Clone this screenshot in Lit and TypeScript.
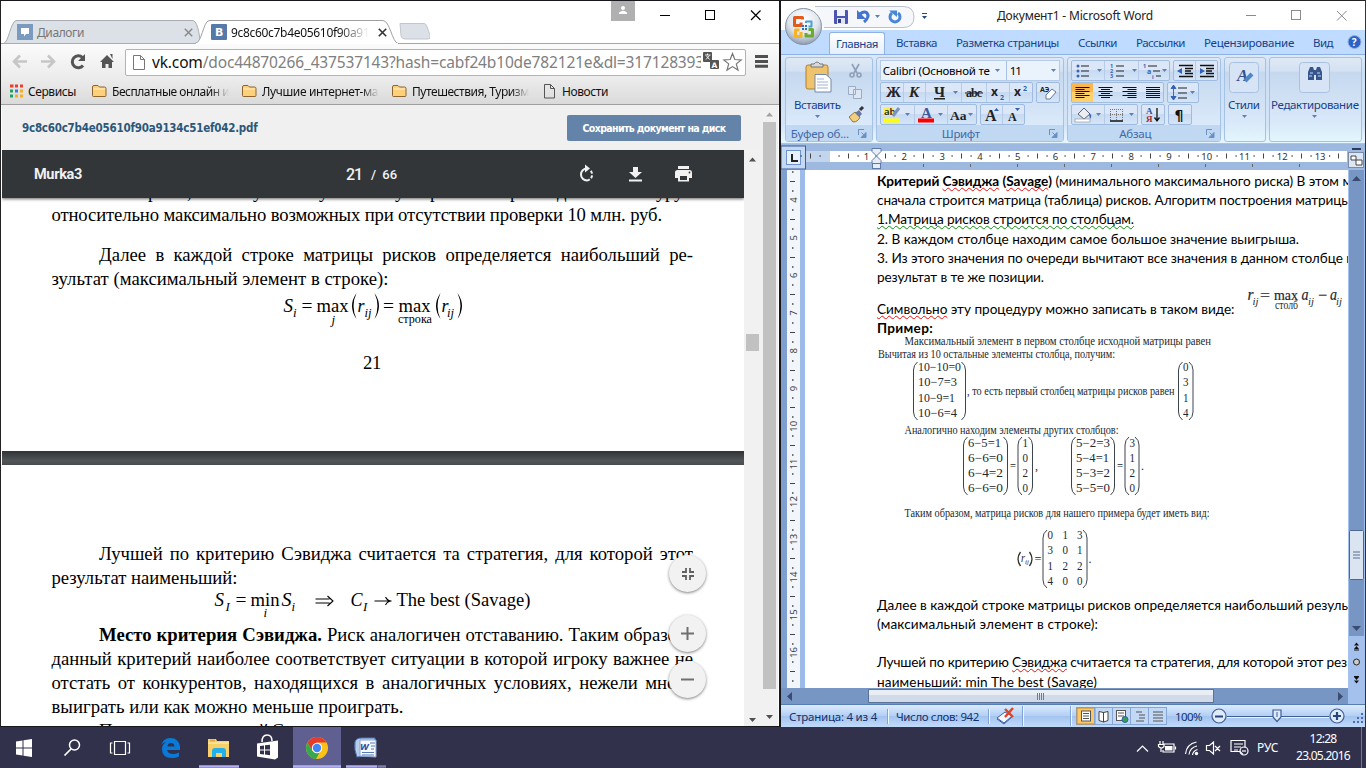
import { LitElement, html, svg, css } from "lit";
import { customElement } from "lit/decorators.js";

/* Text run stretched or tightened to a given advance width. */
const fit = (text: unknown, w: number, cls = "") =>
  html`<span class="fit ${cls}" data-w=${w}>${text}</span>`;

const ic = (w: number, h: number, body: unknown) =>
  html`<svg class="ic" width=${w} height=${h} viewBox="0 0 ${w} ${h}">${body}</svg>`;

const tx = (x: number, y: number, s: string, w?: number, cls = "") =>
  w
    ? svg`<text class=${cls} x=${x} y=${y} textLength=${w} lengthAdjust="spacingAndGlyphs">${s}</text>`
    : svg`<text class=${cls} x=${x} y=${y}>${s}</text>`;

const down = (x: number, y: number, c = "#5b82b8") =>
  svg`<path d="M${x} ${y}h5l-2.5 3z" fill=${c}/>`;

/* ---------- Browser window ---------- */
@customElement("browser-window")
export class BrowserWindow extends LitElement {
  static styles = css`
    :host { display: flex; flex-direction: column; width: 781px; height: 727px; box-sizing: border-box; border: 1px solid #17171c; border-left-color: #222; border-right-width: 2px; border-bottom-width: 1px; background: #fff; overflow: hidden; font-family: "Noto Sans", "Open Sans", sans-serif; font-size: 12px; color: #222; }
    .ic { display: block; flex: none; }
    .fit { display: inline-block; white-space: pre; }
    .strip { display: flex; height: 43px; border-bottom: 1px solid #a5a5a5; box-sizing: border-box; align-items: flex-end; position: relative; }
    .tab { display: grid; height: 24px; margin-bottom: -1px; }
    .tab > * { grid-area: 1 / 1; }
    .tab1 { width: 199px; margin-left: 2px; }
    .tab2 { width: 206px; margin-left: -7px; z-index: 1; }
    .newtab { margin-left: -3px; margin-bottom: 3px; }
    .cell { display: flex; align-items: center; padding: 1px 0 0 14px; height: 22px; }
    .cell2 { padding-left: 16px; }
    .cell .fav { margin-right: 4px; }
    .t1 { color: #777; width: 147px; }
    .t2 { width: 147px; overflow: hidden; }
    .fade { display: flex; width: 138px; overflow: hidden; -webkit-mask-image: linear-gradient(90deg, #000 78%, transparent); mask-image: linear-gradient(90deg, #000 78%, transparent); color: #111; }
    .wbtns { display: flex; align-self: flex-start; margin-left: auto; }
    .nav { display: flex; height: 34px; align-items: center; padding-left: 11px; background: linear-gradient(#fbfbfb, #ececec); box-sizing: border-box; }
    .url { display: flex; width: 621px; height: 27px; box-sizing: border-box; align-items: center; border: 1px solid #b3b3b3; border-radius: 2px; background: #fff; margin: 2px 9px 0 10px; padding-left: 7px; font-size: 15.5px; color: #808080; }
    .url b { color: #111; font-weight: 400; }
    .addr { width: 549px; overflow: hidden; margin-left: 7px; margin-right: 1px; display: flex; }
    .marks { display: flex; height: 26px; align-items: center; background: linear-gradient(#ececec, #dadada); border-bottom: 1px solid #a0a0a0; padding-left: 8px; color: #111; }
    .mk { display: flex; align-items: center; height: 24px; overflow: hidden; }
    .mk .ic { margin-right: 5px; }
    .apps { width: 82px; }
    .news { padding-left: 2px; gap: 2px; }
    .mf { width: 117px; overflow: hidden; -webkit-mask-image: linear-gradient(90deg, #000 85%, transparent); mask-image: linear-gradient(90deg, #000 85%, transparent); display: flex; margin-right: 12px; }
    .body { display: flex; flex: 1; min-height: 0; padding-left: 1px; }
    .main { display: flex; flex-direction: column; width: 759px; }
    .head { display: flex; height: 45px; background: #f0f0f0; align-items: center; padding-left: 20px; font-family: "DejaVu Sans Condensed", "DejaVu Sans", sans-serif; font-stretch: condensed; font-weight: 700; color: #2b587a; font-size: 11.5px; box-sizing: border-box; }
    .save { margin-left: auto; margin-right: 20px; width: 174px; height: 26px; border-radius: 2px; background: #6383a8; color: #fff; display: flex; align-items: center; justify-content: center; font-size: 10.5px; }
    .viewer { display: flex; flex: 1; min-height: 0; }
    .pdf { width: 742px; display: flex; flex-direction: column; overflow: hidden; position: relative; }
    .bar { height: 48px; flex: none; background: #323639; color: #f1f1f1; display: flex; align-items: center; padding-left: 32px; box-sizing: border-box; font-family: Roboto, sans-serif; font-weight: 500; box-shadow: 0 1px 3px rgba(0,0,0,.6); z-index: 1; }
    .nm { width: 312px; font-size: 14.5px; font-weight: 700; }
    .pg { font-size: 16px; width: 25px; }
    .pn { font-size: 13px; width: 205px; }
    .bar .ic + .ic { margin-left: 26px; }
    .page { background: #fff; color: #000; font-family: "Liberation Serif", serif; font-size: 18.7px; line-height: 24px; padding: 0 51px 0 49.5px; overflow: hidden; flex: none; box-sizing: border-box; }
    .p1 { height: 253px; }
    .p2 { height: 261px; padding-top: 77px; }
    .gap { height: 14px; flex: none; background: linear-gradient(#2f3336, #525659 70%, #474b4e); }
    .ln { height: 24px; white-space: nowrap; }
    .j { text-align: justify; text-align-last: justify; }
    .in { padding-left: 47.5px; }
    .sp { margin-top: 16px; }
    .cut { height: 5px; overflow: hidden; }
    .cut svg, .eq { display: block; overflow: visible; font-family: "Liberation Serif", serif; }
    .num { margin-top: 20px; padding-left: 311.5px; }
    .it { font-style: italic; }
    .s { font-size: 13px; }
    .float { position: absolute; left: 667px; width: 37px; height: 37px; border-radius: 50%; background: #f2f2f2; box-shadow: 0 1px 3px rgba(0,0,0,.5); display: grid; place-items: center; z-index: 2; }
    .f1 { top: 405px; } .f2 { top: 465px; } .f3 { top: 511px; }
    .sb { width: 17px; background: #f1f1f1; flex: none; }
    .outer { border-right: 1px solid #fff; }
  `;

  firstUpdated() { fitAll(this.renderRoot); }

  render() {
    const folder = ic(16, 14, svg`<path d="M1.500 3q0-1.500 1.500-1.500h4l1.500 1.500h5q1.500 0 1.500 1.500v7q0 1-1 1h-11.500q-1 0-1-1z" fill="#ffd07a" stroke="#8c6430"/><path d="M2.500 5h11.500" stroke="#ffeec0"/>`);
    return html`
      <div class="strip">
        <div class="tab tab1">
          ${ic(199, 24, svg`<path d="M.5 23.500C6 22 7 3 13 .5H190C196 2 196 20 198.500 23.500z" fill="#dce1e7" stroke="#a9adb3"/>`)}
          <div class="cell"><span class="fav">${ic(16, 16, svg`<rect width="16" height="16" fill="#7a9ac0"/><path d="M4 4h8v6h-3l-2 2.500v-2.500h-3z" fill="#fff"/>`)}</span><span class="t1">${fit("Диалоги", 47)}</span>${ic(9, 9, svg`<path d="M.8.800l7.400 7.400m0-7.400l-7.400 7.400" stroke="#8a8a8a" stroke-width="1.500"/>`)}</div>
        </div>
        <div class="tab tab2">
          ${ic(206, 24, svg`<path d="M0 23.500C7 23 8 2 14 .5H188C195 1 197 22 203 23.500V25H0z" fill="#fff" stroke="#a0a0a0"/><path d="M1 23.900h202" stroke="#fff" stroke-width="1.600"/>`)}
          <div class="cell cell2"><span class="fav">${ic(16, 16, svg`<rect width="16" height="16" rx="1" fill="#5579a8"/><text x="4" y="12" fill="#fff" font-size="11" font-weight="700" font-family="DejaVu Sans">B</text>`)}</span><span class="t2"><span class="fade">${fit("9c8c60c7b4e05610f90a913", 145)}</span></span>${ic(9, 9, svg`<path d="M.8.800l7.400 7.400m0-7.400l-7.400 7.400" stroke="#333" stroke-width="1.600"/>`)}</div>
        </div>
        <div class="newtab">${ic(32, 17, svg`<path d="M2 .5h24q2 0 3 3l3 9q1 3.500-2 3.500h-23q-3 0-4-3z" fill="#dce1e7" stroke="#c2c6cc"/>`)}</div>
        <div class="wbtns">${ic(170, 30, svg`<rect x="2" width="24" height="20" fill="#b0b0b0"/><circle cx="14" cy="7" r="2" fill="#fff"/><path d="M10 13v-1.500q4-3.500 8 0v1.500z" fill="#fff"/><path d="M51 14.500h10M142 9.500l9.500 9.500m0-9.500l-9.500 9.500" stroke="#000" stroke-width="1.200"/><rect x="96.500" y="9.500" width="9" height="9" fill="none" stroke="#000"/>`)}</div>
      </div>
      <div class="nav">
        ${ic(103, 20, svg`<g fill="none" stroke-width="2.600"><path d="M15 10.500H2m6-6l-6 6 6 6M29 10.500h13m-6-6l6 6-6 6" stroke="#c6c6c6"/><path d="M71 14.500a6 6 0 1 1-.5-8" stroke="#555" stroke-width="3"/></g><path d="M73 3v7h-7z" fill="#555"/><path d="M88 11l7-7 7 7h-2v6h-3.500v-4h-3v4h-3.500v-6zM98 3h2.500v5z" fill="#555"/>`)}
        <div class="url">
          ${ic(12, 15, svg`<path d="M.5.500h7l4 4v10h-11zM7.500.500v4h4" fill="#fff" stroke="#777"/>`)}
          <span class="addr">${fit(html`<b>vk.com</b>/doc44870266_437537143?hash=cabf24b10de782121e&amp;dl=317128393`, 552)}</span>
          ${ic(42, 20, svg`<rect x="1" width="9" height="10" rx="1" fill="#555"/><path d="M3 3h5.500M5.500 1.500v1.500M4 7.500l3.500-4M4.500 4l3 3.500" stroke="#fff" stroke-width=".9"/><rect x="8" y="8" width="9" height="9" rx="1" fill="#555"/><text x="9.500" y="15.500" font-size="7.500" font-weight="700" fill="#fff" font-family="DejaVu Sans">A</text><path d="M30.500 1.500l2.300 6 6.400.4-4.900 4 1.700 6.200-5.500-3.500-5.500 3.500 1.700-6.200-4.900-4 6.400-.4z" fill="#fff" stroke="#777" stroke-width="1.200"/>`)}
        </div>
        ${ic(13, 14, svg`<path d="M0 2.500h13M0 7.500h13M0 12.300h13" stroke="#505050" stroke-width="3"/>`)}
      </div>
      <div class="marks">
        <span class="mk apps">${ic(14, 14, svg`<path d="M1 2h3.500M6 2h3M11 2h3" stroke="#e8402c" stroke-width="3"/><path d="M1 7h3" stroke="#25a05c" stroke-width="3"/><path d="M6 7h3" stroke="#3b78e7" stroke-width="3"/><path d="M11 7h3M6 12h3M11 12h3" stroke="#f4ae22" stroke-width="3"/><path d="M1 12h3" stroke="#25a05c" stroke-width="3"/>`)}${fit("Сервисы", 48)}</span>
        <span class="mk">${folder}<span class="mf">${fit("Бесплатные онлайн иг", 122)}</span></span>
        <span class="mk">${folder}<span class="mf">${fit("Лучшие интернет-маг", 121)}</span></span>
        <span class="mk">${folder}<span class="mf">${fit("Путешествия, Туризм", 117)}</span></span>
        <span class="mk news">${ic(12, 15, svg`<path d="M1.500.500h6l4 4v9.500h-10zM7.500.500v4h4" fill="none" stroke="#555"/>`)}${fit("Новости", 46)}</span>
      </div>
      <div class="body">
        <div class="main">
          <div class="head">${fit("9c8c60c7b4e05610f90a9134c51ef042.pdf", 235.5)}<span class="save">${fit("Сохранить документ на диск", 143)}</span></div>
          <div class="viewer">
            <div class="pdf">
              <div class="bar">
                <span class="nm">${fit("Murka3", 48)}</span><span class="pg">${fit("21", 16)}</span><span class="pn">${fit("/  66", 26)}</span>
                ${ic(22, 20, svg`<g fill="none" stroke="#f1f1f1" stroke-width="2"><path d="M11 4.500a6 6 0 1 0 0 12"/><path d="M11 16.500a6 6 0 0 0 3.500-10" stroke-dasharray="3 1.700"/></g><path d="M9 .5l5 4-5 4z" fill="#f1f1f1"/>`)}
                ${ic(22, 20, svg`<path d="M9 3h5v5h4l-6.500 6-6.500-6h4zM5 15.500h13v2h-13z" fill="#f1f1f1"/>`)}
                ${ic(22, 20, svg`<path d="M6 2h11v3h-11zM5.500 6h12q2.500 0 2.500 2.500v5.500h-3v3.500h-11v-3.500h-3v-5.500q0-2.500 2.500-2.500z" fill="#f1f1f1"/><path d="M8 12h7v4h-7z" fill="#323639"/><circle cx="17.500" cy="8.500" r=".9" fill="#323639"/>`)}
              </div>
              <div class="page p1">
                <div class="cut"><svg width="642" height="5" font-size="18.7"><text y="-0.500" x="96 135 201 267 343 378 458 505 604 613">р,уууррдуру</text></svg></div>
                <div class="ln">${fit("относительно максимально возможных при отсутствии проверки 10 млн. руб.", 610.5)}</div>
                <div class="ln j in sp">Далее в каждой строке матрицы рисков определяется наибольший ре-</div>
                <div class="ln">${fit("зультат (максимальный элемент в строке):", 337)}</div>
                <svg class="eq" width="640" height="40" font-size="19">
                  <g transform="translate(-51.500 -291)">
                    ${tx(283, 312, "S", 9.500, "it")}${tx(292.500, 317, "i", 0, "it s")}${tx(301, 312, "=", 11)}${tx(316, 312, "max", 32)}${tx(331, 324, "j", 0, "it s")}
                    <path d="M356 293q-9 13 0 26q-6-13 0-26zM374 293q9 13 0 26q6-13 0-26z"/>
                    ${tx(357, 312, "r", 7, "it")}${tx(364, 317, "ij", 7, "it s")}${tx(382.500, 312, "=", 11)}${tx(398, 312, "max", 32)}${tx(397.500, 323, "строка", 34, "s")}
                    <path d="M440 293q-9 13 0 26q-6-13 0-26zM457 293q9 13 0 26q6-13 0-26z"/>
                    ${tx(441, 312, "r", 7, "it")}${tx(446.500, 317, "ij", 7, "it s")}
                  </g>
                </svg>
                <div class="ln num">${fit("21", 18)}</div>
              </div>
              <div class="gap"></div>
              <div class="page p2">
                <div class="ln j in">Лучшей по критерию Сэвиджа считается та стратегия, для которой этот</div>
                <div class="ln">${fit("результат наименьший:", 186)}</div>
                <svg class="eq" width="640" height="33" font-size="19">
                  <g transform="translate(-51.500 -590)">
                    ${tx(214, 606, "S", 9.500, "it")}${tx(225, 611, "I", 0, "it s")}${tx(235, 606, "=", 11)}${tx(250, 606, "min", 29)}${tx(263, 617, "i", 0, "it s")}${tx(281, 606, "S", 10, "it")}${tx(291, 611, "i", 0, "it s")}
                    <path d="M315 599h14M315 603h14M327 596l5.500 5-5.500 5M374 601h16M385 597q2 4 6 4q-4 0-6 4" fill="none" stroke="#000" stroke-width="1.100"/>
                    ${tx(350, 606, "C", 12, "it")}${tx(362.500, 611, "I", 0, "it s")}${tx(396, 606, "The best (Savage)", 134)}
                  </g>
                </svg>
                <div class="ln j in"><b>Место критерия Сэвиджа.</b> Риск аналогичен отставанию. Таким образом,</div>
                <div class="ln j">данный критерий наиболее соответствует ситуации в которой игроку важнее не</div>
                <div class="ln j">отстать от конкурентов, находящихся в аналогичных условиях, нежели много</div>
                <div class="ln">${fit("выиграть или как можно меньше проиграть.", 352)}</div>
                <div class="ln in">${fit("Применительно к такой С", 184)}</div>
              </div>
              <div class="float f1">${ic(12, 12, svg`<path d="M0 4h4v-4M12 4h-4v-4M0 8h4v4M12 8h-4v4" fill="none" stroke="#606060" stroke-width="1.800"/>`)}</div>
              <div class="float f2">${ic(13, 13, svg`<path d="M6.500 0v13M0 6.500h13" stroke="#707070" stroke-width="2"/>`)}</div>
              <div class="float f3">${ic(13, 13, svg`<path d="M0 6.500h13" stroke="#707070" stroke-width="2"/>`)}</div>
            </div>
            <div class="sb">${ic(17, 576, svg`<path d="M5 11.500l3.500-4 3.500 4zM5 568l3.500 4 3.500-4z" fill="#505050"/><rect x="2" y="184" width="13" height="17" fill="#c1c1c1"/>`)}</div>
          </div>
        </div>
        <div class="sb outer">${ic(17, 621, svg`<path d="M5 11.500l3.500-4 3.500 4z" fill="#a3a3a3"/><path d="M5 610l3.500 4 3.500-4z" fill="#505050"/><rect x="2" y="17" width="13" height="567" fill="#c1c1c1"/>`)}</div>
      </div>`;
  }
}

/* Distributes the difference between natural and wanted width over the letters. */
function fitAll(root: ParentNode) {
  root.querySelectorAll<HTMLElement>(".fit").forEach((el) => {
    const n = (el.textContent || "").length;
    const want = Number(el.dataset.w);
    el.style.letterSpacing = `${(want - el.getBoundingClientRect().width) / n}px`;
  });
}

/* ---------- Word window ---------- */
@customElement("word-window")
export class WordWindow extends LitElement {
  static styles = css`
    :host { display: flex; flex-direction: column; width: 585px; height: 727px; box-sizing: border-box; border-top: 1px solid #222; border-right: 1px solid #333; background: #fff; overflow: hidden; font-family: "Noto Sans", sans-serif; font-size: 11.5px; color: #15428b; position: relative; }
    .ic { display: block; flex: none; }
    .fit { display: inline-block; white-space: pre; }
    .title { display: flex; height: 29px; color: #222; align-items: center; font-size: 12px; }
    .qat { width: 216px; }
    .ttext { width: 241px; }
    .orb { position: absolute; left: 3px; top: 6px; z-index: 2; }
    .tabs { display: flex; height: 24px; background: #bfdbff; align-items: center; padding-left: 48px; }
    .act { width: 56px; height: 22px; margin-top: 2px; margin-right: 11px; box-sizing: border-box; border: 1px solid #8db2e3; border-bottom: 0; border-radius: 3px 3px 0 0; background: linear-gradient(#fff, #e4effb); display: grid; place-items: center; }
    .names { display: flex; gap: 19px; width: 438px; margin-right: 13px; }
    .ribbon { display: flex; height: 90px; padding: 2px 3px 0 4px; gap: 3px; box-sizing: border-box; background: linear-gradient(#dbe8f8, #cadef5 20%, #d3e4f8 80%, #e5f5ff 96%); border-top: 1px solid #8db2e3; border-bottom: 1px solid #9fc6ee; }
    .grp { display: flex; flex-direction: column; height: 85px; box-sizing: border-box; border: 1px solid #a5c2e4; border-radius: 3px; background: linear-gradient(#dfe9f5 0, #d3e1f2 16%, #c5d8ee 17%, #dae9fa 78%, #e2f6fc); overflow: hidden; }
    .g1 { width: 88px; } .g2 { width: 189px; } .g3 { width: 155px; } .g4 { width: 42px; } .g5 { width: 93px; }
    .gin { flex: 1; display: flex; padding: 2px 0 0 3px; }
    .glab { height: 16px; background: #c0d8f1; color: #3e6aaa; display: flex; align-items: center; justify-content: center; position: relative; }
    .glab .fit { margin-right: 18px; }
    .glab .ic { position: absolute; right: 5px; top: 4px; }
    .rows { display: flex; flex-direction: column; gap: 1px; }
    .r { display: flex; gap: 3px; height: 21px; }
    .bg { display: flex; box-sizing: border-box; height: 21px; border: 1px solid #9fbbe0; border-radius: 2px; background: linear-gradient(#dbe7f7 0 45%, #c6d9f1 46%, #d4e5f8); }
    .combo { display: flex; width: 180px; height: 21px; box-sizing: border-box; border: 1px solid #b5cbe8; background: #eaf2fb; color: #000; align-items: center; }
    .c1 { width: 125px; display: flex; align-items: center; gap: 5px; padding-left: 2px; box-sizing: border-box; }
    .c2 { display: flex; align-items: center; gap: 30px; border-left: 1px solid #a5c2e4; height: 19px; padding-left: 3px; }
    .lat { font-family: "Liberation Serif", serif; }
    .ruler, .work { display: flex; }
    .ruler { height: 26px; background: #9db9e0; flex: none; }
    .work { height: 518px; flex: none; background: #9cbbe3; }
    .page { width: 543px; background: #fff; color: #000; overflow: hidden; box-sizing: border-box; padding: 1px 0 0 72px; font-family: Lato, Carlito, sans-serif; font-size: 13.600px; }
    .ln { height: 19.200px; line-height: 21px; white-space: nowrap; }
    .eqline { display: flex; height: 32px; margin-top: -.5px; line-height: 19px; gap: 11px; }
    .sym { padding-top: 14px; height: 18px; }
    .err { text-decoration: underline wavy #e01010 1px; text-underline-offset: 1px; text-decoration-skip-ink: none; }
    .gr { text-decoration: underline wavy #108a10 1px; text-underline-offset: 1px; text-decoration-skip-ink: none; }
    .pic { display: block; overflow: visible; font-family: "Liberation Serif", serif; font-size: 12px; fill: #23282f; }
    .it { font-style: italic; }
    .hs { height: 16px; flex: none; }
    .st { display: flex; height: 22px; box-sizing: border-box; border-top: 1px solid #567db1; background: linear-gradient(#dcebfd, #b4d0f5 48%, #a2c3ee 50%, #c1dafa); align-items: center; padding-left: 8px; color: #14306b; flex: 1; }
    .st .a { width: 98px; border-right: 1px solid #7fa3d5; box-shadow: 1px 0 #eef6ff; margin-right: 8px; }
    .st .b { width: 92px; border-right: 1px solid #7fa3d5; box-shadow: 1px 0 #eef6ff; }
    .z { width: 34px; margin-left: 8px; }
  `;

  firstUpdated() { fitAll(this.renderRoot); }

  private launcher = ic(9, 9, svg`<path d="M.5 6V.500H6" fill="none" stroke="#6b90c4"/><path d="M8 3.500v5h-5zM3.500 3.500l3 3" fill="#6b90c4" stroke="#6b90c4"/>`);

  private paren(x1: number, x2: number, y: number, h: number) {
    return svg`<path d="M${x1 + 4} ${y}q-4 3-4 8v${h - 16}q0 5 4 8M${x2 - 4} ${y}q4 3 4 8v${h - 16}q0 5-4 8" fill="none" stroke="#3c4450"/>`;
  }

  private col(x: number, rows: string[], w: number[], y: number) {
    return rows.map((s, i) => tx(x, y + i * 15.300, s, w[i]));
  }

  private lines(cx: number, kind: "l" | "c" | "r" | "j") {
    return [0, 1, 2, 3, 4, 5].map((i) => {
      const w = kind === "j" || i % 2 === 0 ? 14 : 9;
      const x = kind === "r" ? cx + 7 - w : kind === "c" ? cx - w / 2 : cx - 7;
      return svg`<path d="M${x} ${4.500 + i * 2}h${w}" stroke="#111" stroke-width="1.100"/>`;
    });
  }

  private hruler() {
    const out: unknown[] = [];
    for (let i = 1; i <= 13; i++) out.push(svg`<text x=${85.500 + (i - 1) * 37.800} y="16" text-anchor="middle">${i}</text>`);
    for (let i = -1; i <= 12; i++) {
      const x = Math.round(66.500 + i * 37.800) + 0.5;
      out.push(svg`<path d="M${x} 9.500v5" stroke="#444"/><path d="M${x + 9} 12h1.200M${x - 10} 12h1.200" stroke="#444" stroke-width="1.500"/>`);
    }
    out.push(svg`<path d="M557.500 9.500v5" stroke="#444"/><path d="M548 12h1.200" stroke="#444" stroke-width="1.500"/>`);
    for (let x = 142.500; x < 540; x += 47) out.push(svg`<path d="M${x} 20v3" stroke="#666"/>`);
    return out;
  }

  private vruler() {
    const out: unknown[] = [];
    for (let n = 4; n <= 16; n++) {
      const y = 30 + (n - 4) * 37.700;
      out.push(svg`<text transform="translate(15.500 ${y}) rotate(-90)" text-anchor="middle">${n}</text>`);
    }
    for (let n = 3; n <= 16; n++) {
      const y = Math.round(30 + (n - 3.500) * 37.700) + 0.5;
      out.push(svg`<path d="M9 ${y}h5" stroke="#444"/><path d="M11 ${y + 9.500}h1.500M11 ${y - 9.500}h1.500" stroke="#444" stroke-width="1.500"/>`);
    }
    return out;
  }

  render() {
    const bullets = (xs: number) => [0, 1, 2].map((i) => svg`<path d="M${xs + 6} ${5 + i * 5}h8" stroke="#222" stroke-width="1.200"/>`);
    return html`
      <div class="orb">${ic(40, 40, svg`<defs><radialGradient id="o" cx=".5" cy=".3" r=".7"><stop offset="0" stop-color="#fff"/><stop offset=".6" stop-color="#dfe5ec"/><stop offset="1" stop-color="#8e9cb0"/></radialGradient></defs><circle cx="19.500" cy="19.500" r="18" fill="url(#o)" stroke="#8393aa"/><g fill="none" stroke-width="3"><path d="M17 15.500v3h-6.500v-8h8v2" stroke="#e25a1c" stroke-linejoin="round"/><path d="M22 16v-1.500h5.500v5h-3" stroke="#4b9fdc" stroke-width="2" stroke-linejoin="round"/><path d="M17 25v4.500h-5.500v-6.500h4" stroke="#f6b421" stroke-linejoin="round"/><path d="M22 26v3h6.500v-6.500h-4" stroke="#6aaa2c" stroke-linejoin="round"/></g><g fill="#2f6fc0"><rect x="18" y="18" width="2" height="2"/><rect x="21" y="18" width="2" height="2"/><rect x="18" y="21" width="2" height="2"/><rect x="21" y="21" width="2" height="2"/></g>`)}</div>
      <div class="title">
        <div class="qat">${ic(170, 29, svg`<path d="M34 5.500h88q11 0 11 10.500t-11 10.500h-79" fill="#f5f7fa" stroke="#bac1cb"/><rect x="53" y="9" width="14" height="14" rx="1" fill="#4a55b4"/><rect x="56" y="9" width="8" height="6" fill="#f0f3fb"/><rect x="56" y="17" width="8" height="6" fill="#dfe5f2"/><rect x="57" y="18" width="3" height="4" fill="#343f8c"/><path d="M79 13q4-3.500 7-1q3 4-3 9" fill="none" stroke="#4674cc" stroke-width="3"/><path d="M76 9v9h9z" fill="#4674cc"/>${down(94, 14)}<path d="M111 12a5 5 0 1 0 6 0" fill="none" stroke="#4a86d8" stroke-width="3"/><path d="M108 9.500h8v6.500z" fill="#4a86d8"/><path d="M141 12.500h5" stroke="#27497f"/>${down(141, 15, "#27497f")}`)}</div>
        <div class="ttext">${fit("Документ1 - Microsoft Word", 156)}</div>
        ${ic(110, 29, svg`<path d="M8 14.500h10M99 10l9.500 9.500m0-9.500l-9.500 9.500" stroke="#8a8a8a"/><rect x="53.500" y="9.500" width="9" height="9" fill="none" stroke="#8a8a8a"/>`)}
      </div>
      <div class="tabs">
        <div class="act">${fit("Главная", 42)}</div>
        <div class="names">${fit("Вставка", 41)}${fit("Разметка страницы", 103)}${fit("Ссылки", 39)}${fit("Рассылки", 49)}${fit("Рецензирование", 90)}${fit("Вид", 20)}</div>
        ${ic(15, 15, svg`<circle cx="7.500" cy="7" r="6.500" fill="#2b63c8" stroke="#93b2e0"/><text x="4.800" y="11" font-size="10" font-weight="700" fill="#fff">?</text>`)}
      </div>
      <div class="ribbon">
        <div class="grp g1">
          ${ic(86, 67, svg`<rect x="20" y="7" width="22" height="24" rx="2" fill="#efc26c" stroke="#b08030"/><path d="M25 9v-3h3q3-4 6 0h3v3z" fill="#d8d8d8" stroke="#777"/><path d="M29 16.500h11l5 4.500v13h-16z" fill="#fff" stroke="#7388a8"/><path d="M31 21h7M31 24h11M31 27h11M31 30h11" stroke="#9db5d8"/><g fill="none" stroke="#8f9fb8" stroke-width="1.600"><path d="M66 6l5 9M73 6l-5 9"/><circle cx="66" cy="17" r="2"/><circle cx="73" cy="17" r="2"/></g><path d="M62.500 28.500h7v8h-7zM67.500 31.500h8v9h-8z" fill="#dde6f2" stroke="#9aabc6"/><path d="M63 59l6-5 5 5q-2 5-7 5z" fill="#f1cf7c" stroke="#9a7430"/><path d="M69 55l4-3 3 4-3 3z" fill="#6578a0"/><path d="M74 52l3-3" stroke="#333" stroke-width="3"/><text x="8" y="50.500" textLength="47" font-size="11.500" fill="#15428b">Вставить</text>${down(29, 57)}`)}
          <div class="glab">${fit("Буфер об...", 58)}${this.launcher}</div>
        </div>
        <div class="grp g2">
          <div class="gin"><div class="rows">
            <div class="combo"><span class="c1">${fit("Calibri (Основной те", 107)}${ic(6, 5, down(0, 1))}</span><span class="c2">${fit("11", 11)}${ic(6, 5, down(0, 1))}</span></div>
            <div class="r"><div class="bg">${ic(151, 19, svg`<g class="lat" font-size="15" font-weight="700" fill="#222"><text x="5" y="14" textLength="12">Ж</text><text x="28" y="14" font-style="italic">К</text><text x="53" y="14" text-decoration="underline">Ч</text></g>${down(72, 8)}<text class="lat" x="85" y="14" textLength="16" font-size="12" font-weight="700" fill="#222">abc</text><path d="M84 10h18" stroke="#222"/><g font-weight="700" font-size="12" fill="#222"><text x="110" y="13">x</text><text x="133" y="13">x</text></g><g font-size="7" font-weight="700" fill="#3060b0"><text x="119" y="17">2</text><text x="142" y="8">2</text></g><path d="M22.500 0v19M44.500 0v19M80.500 0v19M105.500 0v19M128.500 0v19" stroke="#b5cbe8"/>`)}</div>
              <div class="bg">${ic(22, 19, svg`<text x="3" y="9" font-size="7" font-weight="700" fill="#222">АЭ</text><path d="M9 12l6-6 4 3-6 7h-4z" fill="#fff" stroke="#64789c"/>`)}</div></div>
            <div class="r"><div class="bg">${ic(95, 19, svg`<rect x="3" y="2" width="10" height="9" fill="#f5f05a"/><text x="3" y="10" font-size="9.500" font-weight="600" fill="#222">ab</text><path d="M12 11l6-8" stroke="#7d92b8" stroke-width="3"/><path d="M3 15.500h16" stroke="#ff0" stroke-width="4"/><text class="lat" x="40" y="13" font-size="15" font-weight="700" fill="#3c5a9c">А</text><path d="M37 15.500h16" stroke="#f00" stroke-width="4"/><text class="lat" x="69" y="15" font-size="13.500" font-weight="700" fill="#222">Aa</text>${down(24, 8)}${down(57, 8)}${down(87, 8)}<path d="M33.500 0v19M66.500 0v19" stroke="#b5cbe8"/>`)}</div>
              <div class="bg">${ic(43, 19, svg`<g class="lat" font-weight="700" fill="#222"><text x="4" y="16" font-size="16">A</text><text x="27" y="16" font-size="12">A</text></g><path d="M13 6l2.500-3 2.500 3zM34 3h5l-2.500 3z" fill="#3060b0"/><path d="M21.500 0v19" stroke="#b5cbe8"/>`)}</div></div>
          </div></div>
          <div class="glab">${fit("Шрифт", 38)}${this.launcher}</div>
        </div>
        <div class="grp g3">
          <div class="gin"><div class="rows">
            <div class="r"><div class="bg">${ic(97, 19, svg`${bullets(3)}${bullets(38)}<g fill="#3a62b0"><circle cx="6" cy="5" r="1.500"/><circle cx="6" cy="10" r="1.500"/><circle cx="6" cy="15" r="1.500"/></g><g font-size="5.500" font-weight="700" fill="#3a62b0"><text x="38" y="7">1</text><text x="38" y="12">2</text><text x="38" y="17">3</text><text x="71" y="7">1</text><text x="75" y="13" font-size="7">a</text><text x="80" y="18">i</text></g><path d="M76 5h9M81 10h7M84 15h5" stroke="#222"/>${down(25, 8)}${down(60, 8)}${down(90, 8)}<path d="M32.500 0v19M66.500 0v19" stroke="#b5cbe8"/>`)}</div>
              <div class="bg">${ic(43, 19, svg`<path d="M5 4.500h14M11 7.500h8M11 10h6M11 12.500h8M5 15.500h14M26 4.500h14M32 7.500h8M32 10h6M32 12.500h8M26 15.500h14" stroke="#111" stroke-width="1.300"/><path d="M8 7v6l-5-3zM26 7v6l5-3z" fill="#3060c0"/><path d="M21.500 0v19" stroke="#b5cbe8"/>`)}</div></div>
            <div class="r"><div class="bg">${ic(91, 19, svg`<rect width="21" height="19" fill="#fbb74e"/><rect y="9" width="21" height="10" fill="#fdd06c"/>${this.lines(10.500, "l")}${this.lines(33.500, "c")}${this.lines(57.500, "r")}${this.lines(81, "j")}`)}</div>
              <div class="bg">${ic(30, 19, svg`<path d="M10 5h9M10 10h9M10 15h9" stroke="#222" stroke-width="1.200"/><path d="M5.500 4v11M3 5.500l2.500-3.500 2.500 3.500zM3 13.500l2.500 3.500 2.500-3.500z" stroke="#3060b0" fill="#3060b0" stroke-width=".9"/>${down(22, 8)}`)}</div></div>
            <div class="r"><div class="bg">${ic(65, 19, svg`<path d="M6 9l6-6 6 6-6 5z" fill="#eee" stroke="#56657d"/><path d="M17 8q4 2 1 6" fill="#3060b0"/><rect x="3" y="14" width="15" height="3" fill="#fff" stroke="#999" stroke-width=".7"/>${down(24, 8)}<path d="M38.500 4v11M44.500 4v11M50.500 4v11M38 4.500h13M38 9.500h13" stroke="#777" stroke-dasharray="1 1"/><path d="M38 16h13" stroke="#111" stroke-width="1.500"/>${down(57, 8)}<path d="M32.500 0v19" stroke="#b5cbe8"/>`)}</div>
              <div class="bg">${ic(22, 19, svg`<g font-size="9" font-weight="700" class="lat"><text x="4" y="9" fill="#2d4f9c">А</text><text x="4" y="17" fill="#a02c2c">Я</text></g><path d="M15 3v12M12.500 12.500l2.500 3.500 2.500-3.500" stroke="#111" stroke-width="1.300" fill="none"/>`)}</div>
              <div class="bg">${ic(22, 19, svg`<text x="5.500" y="15" font-size="14" font-weight="700" fill="#111" font-family="DejaVu Sans">¶</text>`)}</div></div>
          </div></div>
          <div class="glab">${fit("Абзац", 32)}${this.launcher}</div>
        </div>
        <div class="grp g4">${ic(40, 83, svg`<rect x="4.500" y="4.500" width="29" height="30" rx="3" fill="#d6e4f5" stroke="#a9c2e2"/><text class="lat" x="12" y="23" font-size="17" font-style="italic" font-weight="700" fill="#31528f">А</text><path d="M20 23l7-7" stroke="#4d87c8" stroke-width="4"/><text x="3" y="50.500" textLength="32" font-size="11.500" fill="#15428b">Стили</text>${down(17, 57)}`)}</div>
        <div class="grp g5">${ic(91, 83, svg`<rect x="29.500" y="4.500" width="30" height="30" rx="3" fill="#d6e4f5" stroke="#a9c2e2"/><path d="M38 14l2-5h3l1 3h2l1-3h3l2 5v8h-6v-5h-2v5h-6z" fill="#38568e"/><path d="M40 15h3M47 15h3M39 18h3M48 18h3" stroke="#c5d5ec"/><text x="1" y="50.500" textLength="88" font-size="11.500" fill="#15428b">Редактирование</text>${down(42, 57)}`)}</div>
      </div>
      <div class="ruler">${ic(584, 26, svg`
        <rect x="0" y="2" width="24.500" height="23" fill="#c5d9f3" stroke="#3a5f9f"/><rect x="5.500" y="6.500" width="14" height="14" fill="#e8f0fb" stroke="#6f93ca"/><path d="M11 10v7h6" fill="none" stroke="#222" stroke-width="2"/>
        <rect x="25" y="7" width="24" height="11" fill="#c3d5ec"/><rect x="49" y="7" width="517" height="11" fill="#fff"/>
        <g font-size="9.500" fill="#333">${this.hruler()}</g>
        <path d="M91 4.500h9v3l-4.500 4.500 4.500 4.500v3h-9v-3l4.500-4.500-4.500-4.500z" fill="#e6edf7" stroke="#5d7aa8"/><rect x="91.500" y="19.500" width="8" height="5" fill="#e6edf7" stroke="#5d7aa8"/>
        <path d="M571 5h9" stroke="#2b3b5c" stroke-width="2"/><rect x="567.500" y="8.500" width="15" height="15" fill="#dde6f3" stroke="#7c8ba5"/><path d="M570 12h5v4h-5zM575 16h6v5h-6z" fill="#fff" stroke="#444"/>`)}</div>
      <div class="work">
        ${ic(24, 518, svg`<rect width="6" height="518" fill="#7f9fce"/><rect x="6" width="13" height="518" fill="#f2f6fb"/><rect x="19" width="5" height="518" fill="#9cbbe8"/><g font-size="9.500" fill="#444">${this.vruler()}</g>`)}
        <div class="page">
          <div class="ln"><b>${fit(html`Критерий <span class="err">Сэвиджа</span> (<span class="err">Savage</span>)`, 175)}</b>${fit(" (минимального максимального риска) В этом м", 300)}</div>
          <div class="ln">${fit("сначала строится матрица (таблица) рисков. Алгоритм построения матрицы", 474)}</div>
          <div class="ln">${fit(html`<span class="gr">1.Матрица рисков строится по столбцам.</span>`, 257)}</div>
          <div class="ln">${fit("2. В каждом столбце находим самое большое значение выигрыша.", 422)}</div>
          <div class="ln">${fit("3. Из этого значения по очереди вычитают все значения в данном столбце и", 477)}</div>
          <div class="ln">${fit("результат в те же позиции.", 167)}</div>
          <div class="eqline"><span class="sym">${fit(html`<span class="err">Символьно</span> эту процедуру можно записать в таком виде:`, 357.500)}</span>
            <svg class="pic" width="100" height="32"><g class="it" font-size="16" stroke="#23282f" stroke-width=".2">${tx(1.500, 14, "r", 6)}${tx(55.500, 14, "a", 7)}${tx(84, 14, "a", 7)}</g><g class="it" font-size="10.500">${tx(6.500, 19, "ij", 6)}${tx(62, 19, "ij", 6)}${tx(90, 19, "ij", 6)}</g><g font-size="15" stroke="#23282f" stroke-width=".2">${tx(14, 14, "=", 10)}${tx(28, 14, "max", 24)}${tx(72, 14, "−", 9)}</g>${tx(29, 23, "столб", 23)}</svg></div>
          <div class="ln"><b>${fit("Пример:", 56)}</b></div>
          <svg class="pic" width="471" height="258" viewBox="877 337 471 258">
            ${tx(904.500, 345, "Максимальный  элемент  в  первом  столбце  исходной  матрицы  равен", 306.500)}
            ${tx(878, 358, "Вычитая из 10 остальные элементы столбца, получим:", 237)}
            ${this.paren(913.500, 965.500, 362, 58)}${this.col(918, ["10−10=0", "10−7=3", "10−9=1", "10−6=4"], [43, 39, 37, 39], 371)}
            ${tx(967, 394.500, ", то есть первый столбец матрицы рисков равен", 207.500)}
            ${this.paren(1178.500, 1193, 362, 58)}${this.col(1183, ["0", "3", "1", "4"], [5.500, 5.500, 5.500, 5.500], 371)}
            ${tx(904.500, 433.500, "Аналогично находим элементы других столбцов:", 214)}
            ${this.paren(963.500, 1007.500, 437, 58)}${this.col(968, ["6−5=1", "6−6=0", "6−4=2", "6−6=0"], [33, 35, 35, 35], 446.500)}
            ${tx(1010, 470, "=", 6)}${this.paren(1018, 1032.500, 437, 58)}${this.col(1022.500, ["1", "0", "2", "0"], [5.500, 5.500, 5.500, 5.500], 446.500)}${tx(1035, 470, ",")}
            ${this.paren(1071.500, 1114.500, 437, 58)}${this.col(1076, ["5−2=3", "5−4=1", "5−3=2", "5−5=0"], [34, 33, 34, 34], 446.500)}
            ${tx(1117, 470, "=", 6)}${this.paren(1125, 1139, 437, 58)}${this.col(1129.500, ["3", "1", "2", "0"], [5.500, 5.500, 5.500, 5.500], 446.500)}${tx(1141, 470, ".")}
            ${tx(904.500, 517, "Таким образом, матрица рисков для нашего примера будет иметь вид:", 305)}
            ${this.paren(1043, 1087, 530, 58)}
            ${this.col(1047.500, ["0", "3", "1", "4"], [5.500, 5.500, 5.500, 5.500], 539)}${this.col(1062.500, ["1", "0", "2", "0"], [5.500, 5.500, 5.500, 5.500], 539)}${this.col(1077, ["3", "1", "2", "0"], [5.500, 5.500, 5.500, 5.500], 539)}
            <path d="M1020.500 552q-5 7 0 14M1029.500 552q5 7 0 14" fill="none" stroke="#333" stroke-width="1.300"/>
            ${tx(1021, 562, "r", 4, "it")}<text x="1025" y="564" font-size="7" class="it">ij</text>${tx(1034.500, 563, "=", 7)}${tx(1088.500, 563, ".")}
          </svg>
          <div class="ln">${fit("Далее в каждой строке матрицы рисков определяется наибольший резуль", 471)}</div>
          <div class="ln">${fit("(максимальный элемент в строке):", 221)}</div>
          <div class="ln"></div>
          <div class="ln">${fit(html`Лучшей по критерию <span class="err">Сэвиджа</span> считается та стратегия, для которой этот рез`, 470)}</div>
          <div class="ln">${fit(html`наименьший: <span class="err">min</span> <span class="err">The</span> <span class="err">best</span> (<span class="err">Savage</span>)`, 220)}</div>
        </div>
        ${ic(17, 518, svg`<rect width="17" height="518" fill="#a3c1ec"/><rect x="1" width="15" height="466" fill="#7896c4"/><path d="M4 11l4.500-5 4.500 5z" fill="#3b4c70"/><rect x="1.500" y="360.500" width="14" height="49" rx="1" fill="#dbe5f2" stroke="#4d6890"/><path d="M5 382h7M5 385h7M5 388h7" stroke="#5a6e90"/><path d="M4 456h9l-4.500 5z" fill="#3b4c70"/><path d="M6 475.500l2.500-3 2.500 3zM6 479l2.500-3 2.500 3zM6 507l2.500 3 2.500-3zM6 510.500l2.500 3 2.500-3zM6 479.500h5v1h-5zM6 506h5v1h-5z" fill="#111"/><circle cx="8.500" cy="492" r="3" fill="#ccc" stroke="#222"/>`)}
      </div>
      <div class="hs">${ic(584, 16, svg`<rect width="584" height="16" fill="#a3c1ec"/><rect width="567" height="16" fill="#7896c4"/><path d="M11 4v9l-5-4.500zM557 4v9l5-4.500z" fill="#3b4c70"/><rect x="87.500" y="1.500" width="345" height="13" fill="#d0dae9" stroke="#5b7299"/><rect x="88" y="2" width="344" height="5" fill="#e9eef5"/><path d="M256.500 5v7M258.500 5v7M260.500 5v7M262.500 5v7" stroke="#6a7c9c"/>`)}</div>
      <div class="st">
        <span class="a">${fit("Страница: 4 из 4", 88)}</span><span class="b">${fit("Число слов: 942", 83)}</span>
        ${ic(87, 20, svg`<path d="M8 12l8-6 7 4-8 7z" fill="#f2f6ff" stroke="#3d5fa8"/><path d="M8 13l7 5 8-7" fill="none" stroke="#3d5fa8"/><path d="M16 3l8 8m0-9l-8 9" stroke="#e8401c" stroke-width="2.400"/><path d="M33.500 0v20M81.500 0v20" stroke="#7fa3d5"/><path d="M34.500 0v20M82.500 0v20" stroke="#eef6ff"/>`)}
        ${ic(91, 20, svg`<rect x=".5" y="1.500" width="90" height="17" fill="#c3d8f4" stroke="#84a7d8"/><rect x="1" y="2" width="18" height="16" fill="#fdc766" stroke="#c58e30"/><path d="M18.500 2v16M36.500 2v16M54.500 2v16M72.500 2v16" stroke="#84a7d8"/><rect x="5.500" y="5" width="9" height="10" fill="#fff" stroke="#555"/><path d="M7 7.500h6M7 10h6M7 12.500h6M60 6h6M63 9h6M63 12h6M60 15h8M77 6h10M77 9h10M77 12h10M77 15h10" stroke="#555"/><path d="M27.500 6v10M23 5.500l4.500 1 4.500-1v9l-4.500 1.500-4.500-1.500z" fill="#fff" stroke="#444"/><rect x="40.500" y="4.500" width="9" height="10" fill="#fff" stroke="#555"/><path d="M42 7h6M42 10h6" stroke="#555"/><circle cx="49" cy="13.500" r="3" fill="#3a9a5c" stroke="#2a68a8"/>`)}
        <span class="z">${fit("100%", 27)}</span>
        ${ic(155, 20, svg`<path d="M18 10.500h102" stroke="#3f5f94"/><path d="M18 11.500h102" stroke="#eaf3ff"/><g fill="#dfeafa" stroke="#3f5f94" stroke-width="1.200"><circle cx="10" cy="10" r="7"/><circle cx="128" cy="10" r="7"/><path d="M64 4h8v7l-4 4.500-4-4.500z"/></g><path d="M6 10.500h8M124 10h8M128 6v8" stroke="#27477c" stroke-width="2.200"/><path d="M68 6v5" stroke="#3f5f94"/><path d="M152 8h2M148 12h2M152 12h2M144 16h2M148 16h2M152 16h2" stroke="#4e6fa6" stroke-width="2"/>`)}
      </div>`;
  }
}

/* ---------- Desktop ---------- */
@customElement("app-root")
export class AppRoot extends LitElement {
  static styles = css`
    :host { display: flex; flex-direction: column; width: 1366px; height: 768px; overflow: hidden; font-family: "Noto Sans", sans-serif; }
    .wins { display: flex; height: 727px; flex: none; }
    .task { display: flex; height: 41px; background: #31314c; color: #fff; font-size: 12px; }
    .ic { display: block; flex: none; }
    .fit { display: inline-block; white-space: pre; }
    .tray { display: flex; margin-left: auto; align-items: center; }
    .lang { width: 36px; padding-left: 3px; }
    .clock { display: flex; flex-direction: column; align-items: center; width: 60px; line-height: 17px; padding-bottom: 1px; }
  `;

  firstUpdated() { fitAll(this.renderRoot); }

  render() {
    return html`
      <div class="wins"><browser-window></browser-window><word-window></word-window></div>
      <div class="task">
        ${ic(390, 41, svg`
          <path d="M16 14.500l6.500-1v7h-6.500zM23.500 13.300l8.500-1.300v8.500h-8.500zM16 21.500h6.500v7l-6.500-1zM23.500 21.500h8.500v8.500l-8.500-1.300z" fill="#fff"/>
          <circle cx="74.500" cy="18" r="5" fill="none" stroke="#fff" stroke-width="1.500"/><path d="M71 22l-6.500 6.500" stroke="#fff" stroke-width="1.700"/>
          <path d="M114.500 14.500h11v13h-11zM112.500 16h-2v10h2M127.500 16h2v10h-2" fill="none" stroke="#fff" stroke-width="1.200"/>
          <path d="M160.500 20q2-9 10-9t9.500 8.500v3.500h-13q1 4 6 4 3 0 6-1.500v4q-3 1.500-7 1.500-10 0-10-9 0-4.500 4-7-5 1-5.500 5zM167.500 19.500h7q0-3.500-3.500-3.500t-3.500 3.500z" fill="#0a7ad8" fill-rule="evenodd"/>
          <path d="M208 12h8l1 2h12v16h-21z" fill="#f9cf68"/><path d="M208 16h21" stroke="#fff3c0"/><path d="M212 30v-6q0-3 3-3h8q3 0 3 3v6h-4v-4h-6v4z" fill="#22b0ea"/><path d="M210 13.500h5" stroke="#e7a83a" stroke-width="2"/>
          <path d="M257 16.500l21-3v17l-3 2-18-3z" fill="#fff"/><path d="M262 15q0-7 5-7t5 6" fill="none" stroke="#fff" stroke-width="1.500"/><path d="M260 19l4-.5v4h-4zM265 18.300l5-.6v4.800h-5zM260 23.500h4v4l-4-.5zM265 23.500h5v4.700l-5-.6z" fill="#31314c"/>
          <rect x="293" width="48" height="41" fill="#605f91"/><path d="M293 39.500h48M199 39.500h40M346 39.500h31" stroke="#b3b0f0" stroke-width="2.500"/><path d="M377.500 39.500h8.500" stroke="#7f7daa" stroke-width="2.500"/>
          <circle cx="317" cy="21" r="11" fill="#fbc116"/><path d="M307.500 15.500a11 11 0 0 1 19 0h-9.500l-5 8z" fill="#e33b2e"/><path d="M307.500 15.500a11 11 0 0 0 8.500 16.500l5-9-8.500 1z" fill="#35a852"/><circle cx="317" cy="21" r="5.200" fill="#fff"/><circle cx="317" cy="21" r="4.200" fill="#4285f4"/>
          <path d="M355 15q1-4 7-4h13l-1 17-17 2q-3-7-2-15z" fill="#b7cdec" stroke="#4d75b8"/><path d="M360 13h16v17l-16-1z" fill="#f5f8fd" stroke="#8ba5d0"/><path d="M362 25.500h12M362 28h12M370 16h5M371 19h4M371 22h3" stroke="#5879b4"/><text x="360" y="22.500" font-size="9.500" font-weight="700" font-style="italic" fill="#1f4aa0" textLength="10">W</text>`)}
        <div class="tray">
          ${ic(118, 41, svg`<g fill="none" stroke="#fff" stroke-width="1.200"><path d="M1 24.500l5.500-5.500 5.500 5.500"/><path d="M27 17h11v8h-11v-2" stroke-width="1.200"/><path d="M39.500 19.500v3M24 14v3M27 14v3M22.500 17.500h5.500v2q-2.500 3-5.500 0zM25 21v4"/><path d="M49.500 27q1-10 11-12M53 27.500q1-7 8-8.500M56.500 28q.5-4 5-5.500"/><path d="M70.500 18.500h3l4-3.500v12l-4-3.500h-3zM79 19l5 5M84 19l-5 5"/><path d="M107 27.500l-3-3h-9v-11h14v7M98 17h9M98 20h7M98 23h4"/><circle cx="108" cy="24" r="4"/><path d="M106 24h4"/></g><path d="M29 19h7.500v4.500h-7.500z" fill="#fff"/><circle cx="60.500" cy="26.500" r="1.700" fill="#fff"/>`)}
          <span class="lang">${fit("РУС", 21.500)}</span>
          <span class="clock">${fit("12:28", 27)}${fit("23.05.2016", 54)}</span>
          ${ic(13, 41, svg`<path d="M8.500 0v41" stroke="#777790"/>`)}
        </div>
      </div>`;
  }
}
